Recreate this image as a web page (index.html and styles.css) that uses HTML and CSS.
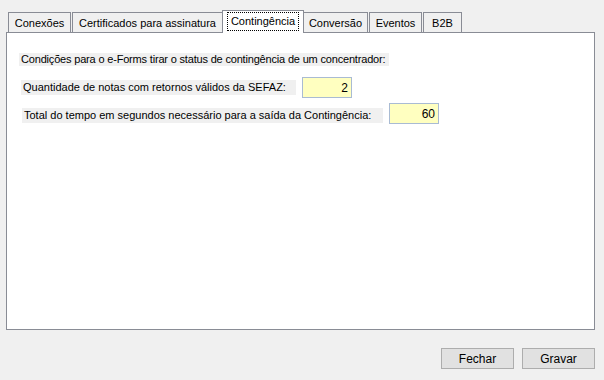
FILE: index.html
```html
<!DOCTYPE html>
<html lang="pt-BR">
<head>
    <meta charset="UTF-8">
    <title>Configurações</title>
    <link rel="stylesheet" href="styles.css">
</head>
<body>
    <div class="form">
        <div class="tabs">
            <div class="tab tab-conexoes">Conexões</div>
            <div class="tab tab-certificados">Certificados para assinatura</div>
            <div class="tab tab-contingencia selected"><span class="focus">Contingência</span></div>
            <div class="tab tab-conversao">Conversão</div>
            <div class="tab tab-eventos">Eventos</div>
            <div class="tab tab-b2b">B2B</div>
        </div>

        <div class="tab-page">
            <div class="label label-intro">Condições para o e-Forms tirar o status de contingência de um concentrador:</div>

            <div class="field-row row-notas">
                <div class="label label-notas">Quantidade de notas com retornos válidos da SEFAZ:</div>
                <input type="text" class="num-input" value="2">
            </div>

            <div class="field-row row-tempo">
                <div class="label label-tempo">Total do tempo em segundos necessário para a saída da Contingência:</div>
                <input type="text" class="num-input" value="60">
            </div>
        </div>

        <div class="button-bar">
            <button class="win-button">Fechar</button>
            <button class="win-button">Gravar</button>
        </div>
    </div>
</body>
</html>
```

FILE: styles.css
```css
body {
    margin: 0;
    background-color: #f0f0f0;
    font-family: "Liberation Sans", Arial, sans-serif;
    font-size: 11px;
    color: #000;
}
.form {
    padding: 10px 9px 0 6px;
}

/* tab strip */
.tabs {
    display: flex;
    align-items: flex-end;
    height: 22px;
    padding-left: 2px;
}
.tab {
    box-sizing: border-box;
    height: 20px;
    margin-right: 1px;
    border: 1px solid #898c95;
    border-bottom: none;
    background-color: #f0f0f0;
    display: flex;
    align-items: center;
    justify-content: center;
    white-space: nowrap;
}
.tab-conexoes { width: 63px; }
.tab-certificados { width: 151px; }
.tab-contingencia { width: 78px; }
.tab-conversao { width: 65px; }
.tab-eventos { width: 53px; }
.tab-b2b { width: 39px; }
.tab.selected {
    position: relative;
    z-index: 1;
    width: 82px;
    height: 23px;
    margin: 0 -1px -1px -2px;
    background-color: #fff;
    padding-bottom: 2px;
}
.focus {
    outline: 1px dotted #000;
    outline-offset: 0;
    padding: 2px 3px 3px 3px;
}

/* page */
.tab-page {
    box-sizing: border-box;
    height: 298px;
    border: 1px solid #898c95;
    background-color: #fff;
    padding: 20px 0 0 12px;
}
.label {
    background-color: #f0f0f0;
    white-space: nowrap;
    box-sizing: border-box;
    padding-left: 2px;
}
.label-intro {
    width: 370px;
    height: 13px;
    line-height: 13px;
    letter-spacing: -0.18px;
}
.field-row {
    display: flex;
    align-items: center;
    gap: 6px;
}
.row-notas {
    margin: 11px 0 0 2px;
}
.row-tempo {
    margin: 5px 0 0 3px;
}
.label-notas {
    width: 275px;
    height: 15px;
    line-height: 15px;
}
.label-tempo {
    width: 361px;
    height: 15px;
    line-height: 15px;
    margin-top: 3px;
}
.num-input {
    box-sizing: border-box;
    width: 50px;
    height: 21px;
    border: 1px solid #a9bbd3;
    background-color: #ffffc0;
    font-family: inherit;
    font-size: 12px;
    text-align: right;
    padding: 0 3px 0 0;
    margin: 0;
    outline: none;
}

/* buttons */
.button-bar {
    display: flex;
    justify-content: flex-end;
    gap: 8px;
    margin-top: 18px;
}
.win-button {
    box-sizing: border-box;
    width: 73px;
    height: 21px;
    border: 1px solid #adadad;
    background-color: #e1e1e1;
    font-family: inherit;
    font-size: 12px;
    color: #000;
    padding: 0;
    cursor: pointer;
}
```
